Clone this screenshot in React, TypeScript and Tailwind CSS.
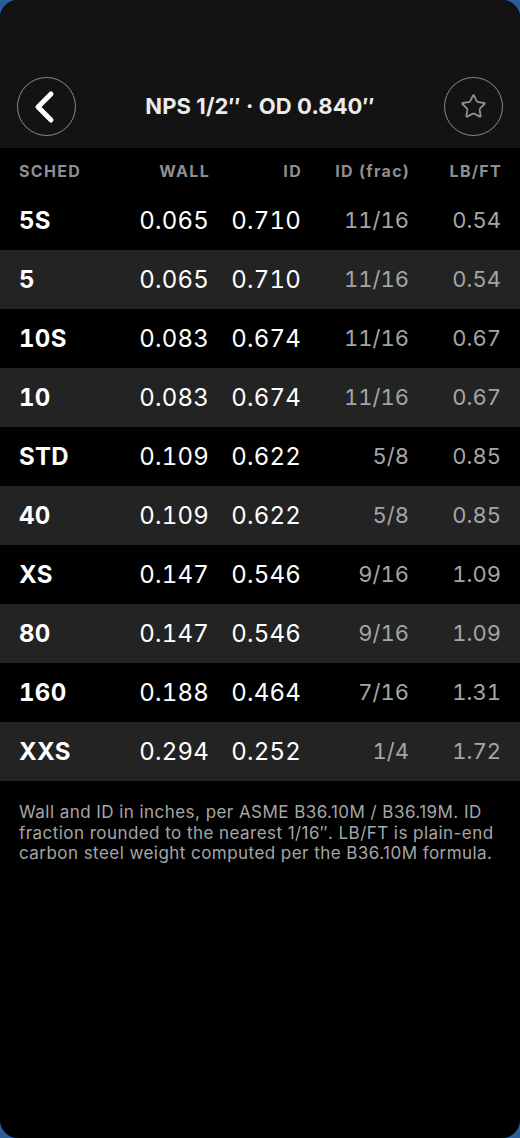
import { Star } from 'lucide-react';

const rows = [
  { sched: '5S', wall: '0.065', id: '0.710', frac: '11/16', lb: '0.54' },
  { sched: '5', wall: '0.065', id: '0.710', frac: '11/16', lb: '0.54' },
  { sched: '10S', wall: '0.083', id: '0.674', frac: '11/16', lb: '0.67' },
  { sched: '10', wall: '0.083', id: '0.674', frac: '11/16', lb: '0.67' },
  { sched: 'STD', wall: '0.109', id: '0.622', frac: '5/8', lb: '0.85' },
  { sched: '40', wall: '0.109', id: '0.622', frac: '5/8', lb: '0.85' },
  { sched: 'XS', wall: '0.147', id: '0.546', frac: '9/16', lb: '1.09' },
  { sched: '80', wall: '0.147', id: '0.546', frac: '9/16', lb: '1.09' },
  { sched: '160', wall: '0.188', id: '0.464', frac: '7/16', lb: '1.31' },
  { sched: 'XXS', wall: '0.294', id: '0.252', frac: '1/4', lb: '1.72' },
];

const cols = 'grid grid-cols-[1fr_94px_92px_108px_92px] items-center px-[19px]';

export default function App() {
  return (
    <div className="bg-[#2b5d99] min-h-[1138px] font-['Inter',sans-serif]">
      <div className="min-h-[1138px] bg-black rounded-[18px] overflow-hidden flex flex-col">
        {/* Header */}
        <div className="h-[148px] bg-[#131313] flex items-end pb-[12px] px-[17px]">
          <div className="flex items-center justify-between w-full">
            <button className="w-[59px] h-[59px] rounded-full border-[1.5px] border-[#8c8c8c] flex items-center justify-center text-white">
              <svg width="22" height="34" viewBox="0 0 22 34" fill="none" className="-ml-[3px]">
                <polyline
                  points="17,4 4,17 17,30"
                  stroke="currentColor"
                  strokeWidth="5"
                  strokeLinecap="round"
                  strokeLinejoin="round"
                />
              </svg>
            </button>
            <h1 className="text-[#ececec] text-[22px] font-bold tracking-[0.1px]">NPS 1/2″ · OD 0.840″</h1>
            <button className="w-[59px] h-[59px] rounded-full border-[1.5px] border-[#8c8c8c] flex items-center justify-center text-[#8f8f8f]">
              <Star size={27} strokeWidth={1.6} />
            </button>
          </div>
        </div>

        {/* Table header */}
        <div className={`${cols} h-[43px] pt-[2px] text-[16px] font-bold text-[#8e8e93] tracking-[1.3px]`}>
          <div>SCHED</div>
          <div className="text-right -mr-[1px]">WALL</div>
          <div className="text-right -mr-[1px]">ID</div>
          <div className="text-right -mr-[1px]">ID (frac)</div>
          <div className="text-right -mr-[1px]">LB/FT</div>
        </div>

        {/* Rows */}
        {rows.map((r, i) => (
          <div
            key={r.sched}
            className={`${cols} h-[59px] tabular-nums ${i % 2 === 1 ? 'bg-[#232323]' : 'bg-black'}`}
          >
            <div className="text-[24px] font-bold text-white tracking-[0.3px]">{r.sched}</div>
            <div className="text-[24px] text-right text-white tracking-[0.2px]">{r.wall}</div>
            <div className="text-[24px] text-right text-white tracking-[0.2px]">{r.id}</div>
            <div className="text-[22px] text-right text-[#a5a5a5]">{r.frac}</div>
            <div className="text-[22px] text-right text-[#a5a5a5]">{r.lb}</div>
          </div>
        ))}

        {/* Footnote */}
        <p className="px-[19px] pt-[21px] text-[17px] leading-[20.5px] tracking-[0.45px] text-[#a6a6a6]">
          Wall and ID in inches, per ASME B36.10M / B36.19M. ID fraction rounded to the nearest 1/16″. LB/FT is
          plain-end carbon steel weight computed per the B36.10M formula.
        </p>
      </div>
    </div>
  );
}
